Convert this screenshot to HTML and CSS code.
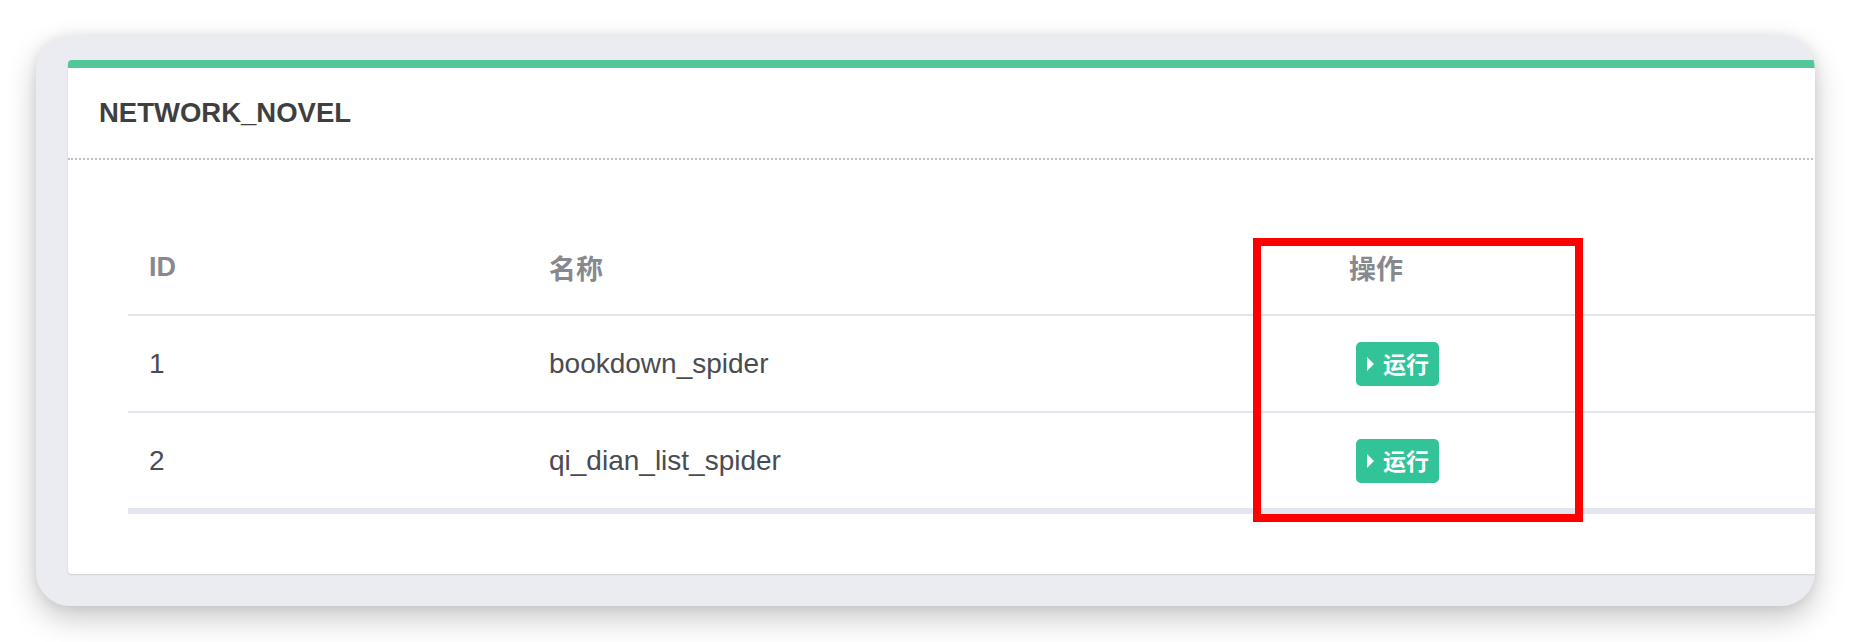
FILE: index.html
```html
<!DOCTYPE html>
<html lang="zh-CN">
<head>
<meta charset="utf-8">
<title>NETWORK_NOVEL</title>
<link rel="stylesheet" href="styles.css">
</head>
<body>
<div class="window">
  <div class="card">
    <div class="card-header">
      <h3 class="card-title">NETWORK_NOVEL</h3>
    </div>
    <div class="card-body">
      <table class="spider-table">
        <colgroup>
          <col class="col-id">
          <col class="col-name">
          <col class="col-op">
        </colgroup>
        <thead>
          <tr><th>ID</th><th>名称</th><th>操作</th></tr>
        </thead>
        <tbody>
          <tr>
            <td>1</td>
            <td>bookdown_spider</td>
            <td><button class="run-btn"><span class="tri"></span><span class="run-text">运行</span></button></td>
          </tr>
          <tr>
            <td>2</td>
            <td>qi_dian_list_spider</td>
            <td><button class="run-btn"><span class="tri"></span><span class="run-text">运行</span></button></td>
          </tr>
        </tbody>
      </table>
    </div>
  </div>
  <div class="highlight"></div>
</div>
</body>
</html>
```
FILE: styles.css
```css
html, body {
  margin: 0;
  padding: 0;
  background: #ffffff;
  width: 1852px;
  height: 642px;
  overflow: hidden;
  font-family: "Liberation Sans", "Noto Sans CJK SC", sans-serif;
}

.window {
  position: relative;
  margin: 36px 0 0 36px;
  width: 1779px;
  height: 570px;
  box-sizing: border-box;
  padding: 24px 0 0 32px;
  background: #ebecf1;
  border-radius: 34px;
  overflow: hidden;
  box-shadow: 0 12px 30px rgba(0, 0, 0, 0.22), 0 0 12px rgba(0, 0, 0, 0.08);
}

.card {
  width: 1800px;
  height: 514px;
  box-sizing: border-box;
  background: #ffffff;
  border-top: 8px solid #53c797;
  border-radius: 4px;
  box-shadow: 0 1px 2px rgba(0, 0, 0, 0.12);
}

.card-header {
  height: 90px;
  display: flex;
  align-items: center;
  padding-left: 31px;
  border-bottom: 2px dotted #c2c2c2;
}

.card-title {
  margin: 0;
  font-size: 27.5px;
  font-weight: bold;
  color: #3f3f3f;
  line-height: 1;
}

.card-body {
  padding: 60px 0 0 60px;
}

.spider-table {
  border-collapse: collapse;
  width: 1760px;
  table-layout: fixed;
  border-bottom: 6px solid #e4e6ef;
}

.col-id { width: 400px; }
.col-name { width: 800px; }

.spider-table th,
.spider-table td {
  text-align: left;
  vertical-align: middle;
  padding: 0 0 0 21px;
}

.spider-table th {
  height: 94px;
  font-family: "Liberation Sans", "Noto Sans CJK SC", sans-serif;
  font-size: 27px;
  font-weight: bold;
  color: #88898f;
  border-bottom: 2px solid #e4e6ef;
}

.spider-table td {
  height: 95px;
  font-size: 28px;
  color: #4b4c51;
}

.spider-table tbody tr:first-child td {
  border-bottom: 2px solid #e4e6ef;
}

.run-btn {
  display: inline-flex;
  align-items: center;
  gap: 9px;
  height: 44px;
  margin-left: 7px;
  padding: 0 10px 0 11px;
  border: none;
  border-radius: 5px;
  background: #32c399;
  color: #ffffff;
  font-family: "Noto Sans CJK SC", sans-serif;
  font-size: 23px;
  font-weight: bold;
  line-height: 1;
}

.tri {
  width: 0;
  height: 0;
  border-top: 7.5px solid transparent;
  border-bottom: 7.5px solid transparent;
  border-left: 7px solid #ffffff;
}

.highlight {
  position: absolute;
  left: 1217px;
  top: 202px;
  width: 330px;
  height: 284px;
  box-sizing: border-box;
  border: 8px solid #ff0000;
}
```
